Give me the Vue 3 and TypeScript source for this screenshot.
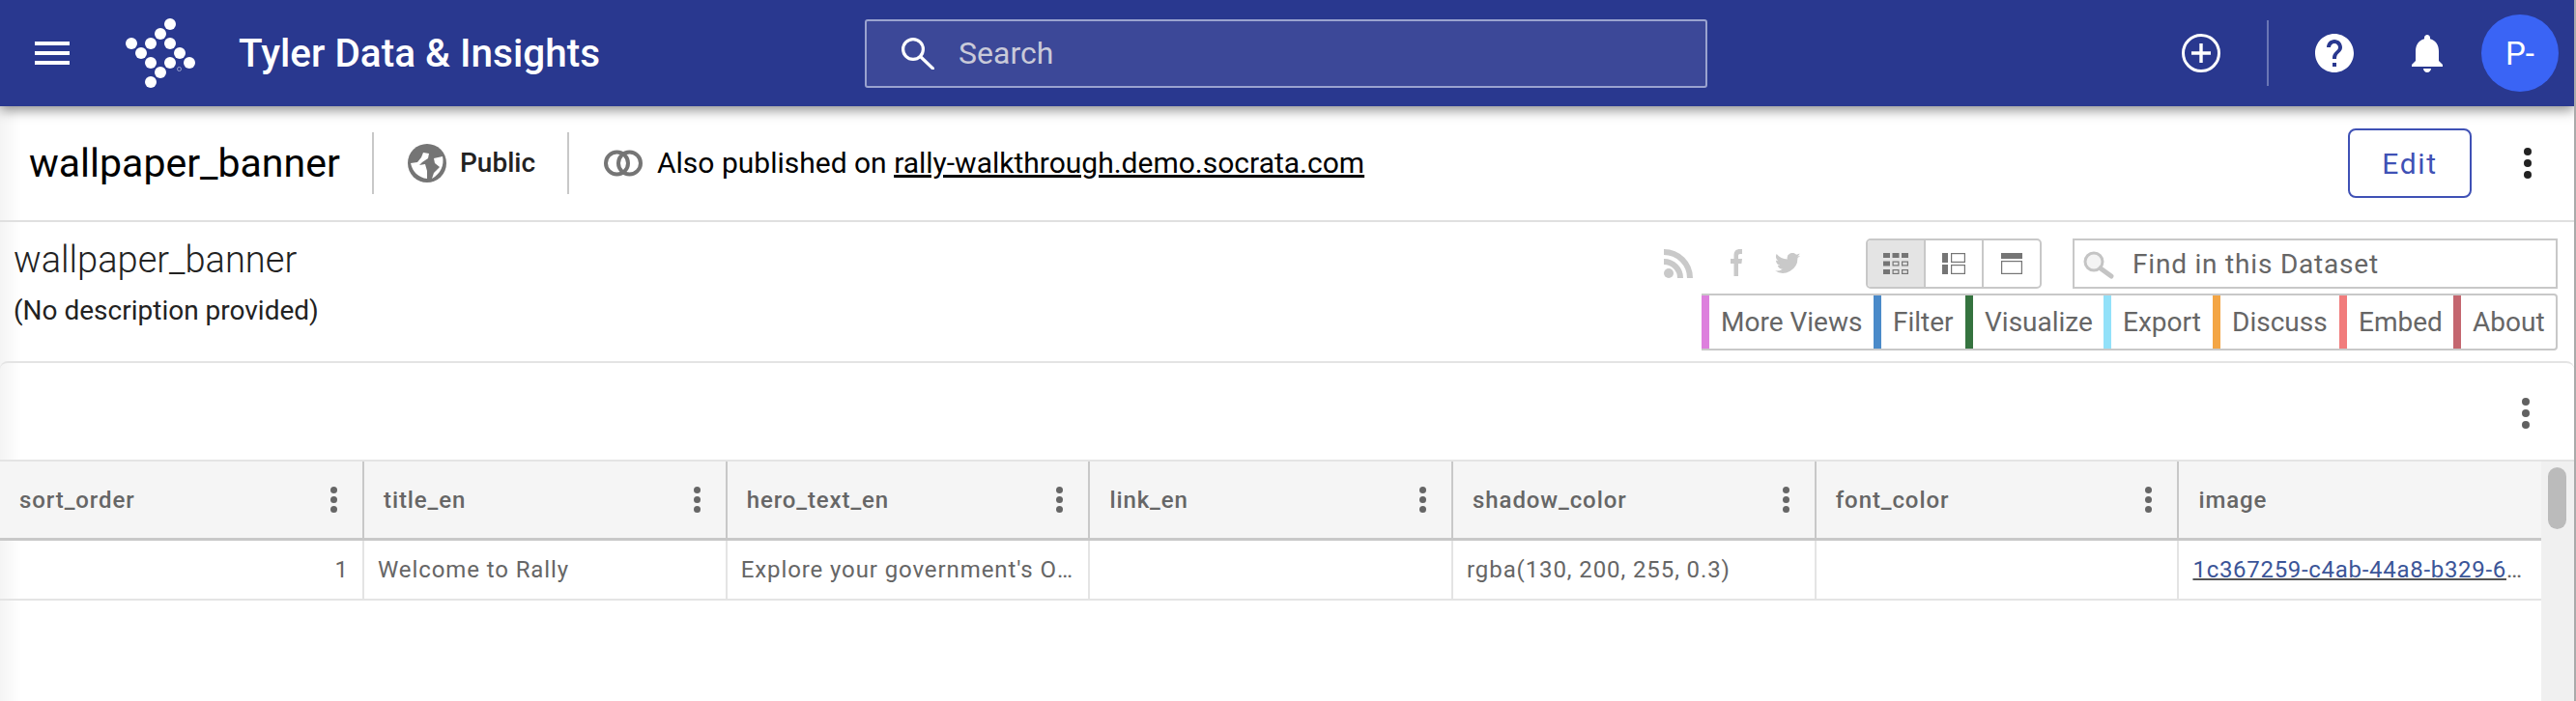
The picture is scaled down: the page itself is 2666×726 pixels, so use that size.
<script setup lang="ts">
const dots: [number, number][] = [
  [176, 23], [166, 33], [136, 43], [156, 43], [176, 43], [146, 53],
  [186, 53], [156, 63], [176, 63], [196, 63], [166, 73], [156, 83],
]
const tabs = [
  { label: 'More Views', color: '#dd80dd' },
  { label: 'Filter', color: '#4a8ac9' },
  { label: 'Visualize', color: '#35733f' },
  { label: 'Export', color: '#92e1f9' },
  { label: 'Discuss', color: '#f3a545' },
  { label: 'Embed', color: '#f17c7c' },
  { label: 'About', color: '#c4666f' },
]
const columns = ['sort_order', 'title_en', 'hero_text_en', 'link_en', 'shadow_color', 'font_color', 'image']
</script>

<template>
  <div class="page">
    <header class="topbar">
      <div class="burger"><span></span><span></span><span></span></div>
      <svg class="logo" viewBox="130 17 72 72" width="72" height="72">
        <circle v-for="(d, i) in dots" :key="i" :cx="d[0]" :cy="d[1]" r="6" fill="#fff" />
        <circle cx="185.500" cy="69.500" r="2" fill="none" stroke="#9aa3cf" stroke-width="1" />
      </svg>
      <div class="brand">Tyler Data &amp; Insights</div>
      <div class="search">
        <svg class="search-icon" viewBox="0 0 34 34" width="34" height="34">
          <circle cx="12" cy="13" r="10.400" fill="none" stroke="#fff" stroke-width="3.200" />
          <path d="M20 21l12.500 12" fill="none" stroke="#fff" stroke-width="3.200" stroke-linecap="round" />
        </svg>
        <span>Search</span>
      </div>
      <div class="top-actions">
        <svg viewBox="0 0 40 40" width="40" height="40" class="plus">
          <circle cx="20" cy="20" r="18.500" fill="none" stroke="#fff" stroke-width="3" />
          <path d="M20 10v20M10 20h20" stroke="#fff" stroke-width="3.400" />
        </svg>
        <div class="top-divider"></div>
        <svg viewBox="2 2 20 20" width="40" height="40" class="help">
          <path fill="#fff" d="M12 2C6.480 2 2 6.480 2 12s4.480 10 10 10 10-4.480 10-10S17.520 2 12 2zm1 17h-2v-2h2v2zm2.070-7.750l-.9.920C13.450 12.900 13 13.500 13 15h-2v-.5c0-1.100.450-2.100 1.170-2.830l1.240-1.260c.370-.360.590-.860.590-1.410 0-1.100-.9-2-2-2s-2 .9-2 2H8c0-2.210 1.790-4 4-4s4 1.790 4 4c0 .880-.360 1.680-.930 2.250z" />
        </svg>
        <svg viewBox="4 2 16 20" width="32" height="40" class="bell">
          <path fill="#fff" d="M12 22c1.100 0 2-.9 2-2h-4c0 1.100.9 2 2 2zm6-6v-5c0-3.070-1.630-5.640-4.500-6.320V4c0-.830-.670-1.500-1.500-1.500s-1.500.670-1.500 1.500v.680C7.640 5.360 6 7.920 6 11v5l-2 2v1h16v-1l-2-2z" />
        </svg>
        <div class="avatar">P-</div>
      </div>
    </header>

    <section class="assetbar">
      <h1 class="asset-name">wallpaper_banner</h1>
      <div class="vr"></div>
      <svg class="globe" viewBox="0 0 40 40" width="40" height="40">
        <circle cx="20" cy="20" r="20" fill="#757575" />
        <path fill="#fff" d="M3 20l7-1 4-5 2-5 6 1-1 5-6 4-3 3 6-1 2 7v8C11 35 5 29 3 20zM27 15l9-2c2 9-2 18-11 23l2-6 6-6-5-4z" />
      </svg>
      <span class="visibility">Public</span>
      <div class="vr"></div>
      <svg class="rings" viewBox="0 0 40 28" width="40" height="28">
        <circle cx="13.500" cy="14" r="11.500" fill="none" stroke="#757575" stroke-width="4" />
        <circle cx="26.500" cy="14" r="11.500" fill="none" stroke="#757575" stroke-width="4" />
      </svg>
      <span class="published">Also published on <span class="domain">rally-walkthrough.demo.socrata.com</span></span>
      <button class="edit">Edit</button>
      <div class="kebab big"><i></i><i></i><i></i></div>
    </section>

    <section class="infobar">
      <div class="info-left">
        <h2 class="ds-name">wallpaper_banner</h2>
        <p class="ds-desc">(No description provided)</p>
      </div>
      <div class="info-right">
        <div class="tools">
          <svg class="soc rss" viewBox="0 0 30 30" width="30" height="30">
            <circle cx="5" cy="25" r="5" fill="#c9c9c9" />
            <path d="M0 13a17 17 0 0 1 17 17M0 3a27 27 0 0 1 27 27" fill="none" stroke="#c9c9c9" stroke-width="6" />
          </svg>
          <svg class="soc fb" viewBox="0 0 12 28" width="12" height="28">
            <path fill="#c9c9c9" d="M3.500 28V15H0v-5h3.500V6.500C3.500 2 6 0 9.500 0H12v5H10C8.500 5 8 5.800 8 7v3h4l-.6 5H8v13z" />
          </svg>
          <svg class="soc tw" viewBox="0 0 24 20" width="30" height="22">
            <path fill="#c9c9c9" d="M24 2.400c-.9.400-1.800.7-2.800.8 1-.6 1.800-1.600 2.200-2.700-1 .6-2 1-3.100 1.200A4.900 4.900 0 0 0 11.800 6C7.700 5.800 4.100 3.900 1.700.9c-1.300 2.200-.6 5 1.500 6.500-.8 0-1.600-.2-2.200-.6 0 2.300 1.600 4.400 3.900 4.900-.7.200-1.500.2-2.200.1.600 2 2.400 3.400 4.600 3.400A10 10 0 0 1 0 16.700 14 14 0 0 0 21.500 4.500c1-.7 1.800-1.300 2.500-2.100z" />
          </svg>
          <div class="views">
            <div class="view active">
              <svg viewBox="0 0 26 22" width="26" height="22">
                <g fill="#757575">
                  <rect x="0" y="0" width="7" height="5" /><rect x="9.500" y="0" width="7" height="5" /><rect x="19" y="0" width="7" height="5" />
                  <rect x="0" y="8.500" width="7" height="5" /><rect x="0" y="17" width="7" height="5" />
                </g>
                <g fill="none" stroke="#757575" stroke-width="1.200">
                  <rect x="10.100" y="9.100" width="5.800" height="3.800" /><rect x="19.600" y="9.100" width="5.800" height="3.800" />
                  <rect x="10.100" y="17.600" width="5.800" height="3.800" /><rect x="19.600" y="17.600" width="5.800" height="3.800" />
                </g>
              </svg>
            </div>
            <div class="view">
              <svg viewBox="0 0 24 22" width="24" height="22">
                <g fill="#757575"><rect x="0" y="0" width="6" height="10" /><rect x="0" y="12" width="6" height="10" /></g>
                <g fill="none" stroke="#757575" stroke-width="1.200">
                  <rect x="9.600" y=".6" width="13.800" height="8.800" /><rect x="9.600" y="12.600" width="13.800" height="8.800" />
                </g>
              </svg>
            </div>
            <div class="view">
              <svg viewBox="0 0 22 22" width="22" height="22">
                <rect x="0" y="0" width="22" height="6" fill="#757575" />
                <rect x=".6" y="8.600" width="20.800" height="12.800" fill="none" stroke="#757575" stroke-width="1.200" />
              </svg>
            </div>
          </div>
          <div class="find">
            <svg viewBox="0 0 32 32" width="32" height="32">
              <circle cx="11" cy="14" r="9" fill="#f4f4f4" stroke="#c4c4c4" stroke-width="3" />
              <path d="M18 21l11 8" stroke="#c4c4c4" stroke-width="5" stroke-linecap="round" />
            </svg>
            <span>Find in this Dataset</span>
          </div>
        </div>
        <nav class="tabs">
          <div v-for="t in tabs" :key="t.label" class="tab" :style="{ borderLeftColor: t.color }">{{ t.label }}</div>
        </nav>
      </div>
    </section>

    <section class="grid-card">
      <div class="grid-tools">
        <div class="kebab mid"><i></i><i></i><i></i></div>
      </div>
      <div class="grid-body">
        <div class="grid-table">
          <div class="head-row">
            <div v-for="(c, i) in columns" :key="c" class="hcell">
              <span>{{ c }}</span>
              <div v-if="i < 6" class="kebab small"><i></i><i></i><i></i></div>
            </div>
          </div>
          <div class="data-row">
            <div class="dcell num">1</div>
            <div class="dcell">Welcome to Rally</div>
            <div class="dcell hero">Explore your government's Open Data</div>
            <div class="dcell"></div>
            <div class="dcell">rgba(130, 200, 255, 0.3)</div>
            <div class="dcell"></div>
            <div class="dcell link"><a>1c367259-c4ab-44a8-b329-6f0e3a1d9c27</a></div>
          </div>
        </div>
        <div class="scrolltrack"><div class="thumb"></div></div>
      </div>
    </section>
  </div>
</template>

<style>
html, body { margin: 0; padding: 0; background: #fff; overflow: hidden; }
</style>

<style scoped>
* { box-sizing: border-box; }
.page {
  width: 2666px;
  height: 726px;
  overflow: hidden;
  position: relative;
  font-family: Roboto, "Liberation Sans", sans-serif;
  background: linear-gradient(90deg, #f4f4f4 0, #fff 22px);
  border-right: 2px solid #aaa;
}
.topbar {
  height: 110px;
  background: #29388f;
  display: flex;
  align-items: center;
  position: relative;
  z-index: 2;
  box-shadow: 0 4px 12px rgba(0, 0, 0, 0.45);
  color: #fff;
}
.burger { width: 36px; margin-left: 36px; display: flex; flex-direction: column; gap: 6px; flex: none; }
.burger span { height: 4px; background: #fff; display: block; }
.logo { margin-left: 58px; flex: none; }
.brand { margin-left: 45px; font-size: 40.500px; font-weight: 500; width: 648px; flex: none; white-space: nowrap; }
.search {
  width: 872px;
  height: 71px;
  flex: none;
  border: 2px solid #9aa3cf;
  border-radius: 3px;
  background: #3c4898;
  display: flex;
  align-items: center;
  padding-left: 36px;
  font-size: 32px;
  color: #c9cad9;
}
.search-icon { margin-right: 25px; flex: none; }
.top-actions { flex: 1; display: flex; align-items: center; height: 110px; }
.plus { margin-left: 491px; flex: none; }
.top-divider { width: 2px; height: 68px; background: #6a76b5; margin-left: 48px; flex: none; }
.help { margin-left: 48px; flex: none; }
.bell { margin-left: 60px; flex: none; }
.avatar {
  width: 80px;
  height: 80px;
  border-radius: 50%;
  background: #3a64f5;
  margin-left: 40px;
  flex: none;
  display: flex;
  align-items: center;
  justify-content: center;
  font-size: 33px;
}
.assetbar {
  height: 120px;
  display: flex;
  align-items: center;
  border-bottom: 2px solid #e0e0e0;
  padding-left: 30px;
  position: relative;
}
.asset-name { margin: 0; font-size: 41px; font-weight: 400; color: #000; width: 355px; white-space: nowrap; }
.vr { width: 2px; height: 64px; background: #c8c8c8; flex: none; }
.globe { margin-left: 35px; flex: none; }
.visibility { font-size: 28px; font-weight: 500; color: #222; margin: 0 0 2px 14px; width: 111px; }
.rings { margin-left: 36px; flex: none; }
.published { font-size: 30px; color: #000; margin: 0 0 2px 15px; white-space: nowrap; }
.domain { text-decoration: underline; }
.edit {
  position: absolute;
  left: 2430px;
  top: 23px;
  width: 128px;
  height: 72px;
  background: #fff;
  border: 2px solid #3f51b5;
  border-radius: 8px;
  color: #3f51b5;
  font: 400 30px Roboto, sans-serif;
  letter-spacing: 1.700px;
}
.kebab { display: flex; flex-direction: column; align-items: center; }
.kebab i { display: block; border-radius: 50%; }
.big { position: absolute; left: 2612px; top: 43px; gap: 4px; }
.big i { width: 8px; height: 8px; background: #222; }
.infobar { height: 144px; display: flex; justify-content: space-between; position: relative; }
.info-left { padding-left: 14px; }
.ds-name { margin: 17px 0 0; font-size: 38px; font-weight: 300; color: #222; }
.ds-desc { margin: 14px 0 0; font-size: 28px; color: #222; }
.info-right { width: 927px; margin-right: 17px; padding-top: 17px; }
.tools { display: flex; align-items: flex-start; height: 52px; position: relative; }
.soc { position: absolute; filter: blur(.6px); }
.rss { left: 2px; top: 11px; }
.fb { left: 71px; top: 11px; }
.tw { left: 115px; top: 15px; }
.views {
  position: absolute;
  left: 211px;
  top: 0;
  width: 182px;
  height: 52px;
  display: flex;
  border: 2px solid #c8c8c8;
  border-radius: 5px;
  overflow: hidden;
}
.view { flex: 1; display: flex; align-items: center; justify-content: center; border-left: 2px solid #c8c8c8; }
.view:first-child { border-left: 0; background: #e4e4e4; }
.find {
  position: absolute;
  left: 425px;
  top: 0;
  width: 502px;
  height: 52px;
  border: 2px solid #c8c8c8;
  display: flex;
  align-items: center;
  padding-left: 9px;
  font-size: 28px;
  color: #666;
  letter-spacing: .8px;
}
.find svg { filter: blur(.5px); flex: none; }
.find span { margin-left: 19px; }
.tabs {
  margin-left: 41px;
  margin-top: 5px;
  height: 59px;
  width: 886px;
  display: flex;
  border: 2px solid #c8c8c8;
  border-left: 0;
  border-radius: 0 4px 4px 0;
}
.tab {
  border-left: 8px solid;
  font-size: 28px;
  color: #666;
  padding-left: 12px;
  display: flex;
  align-items: center;
  white-space: nowrap;
}
.tab:nth-child(1) { width: 178px; }
.tab:nth-child(2) { width: 95px; }
.tab:nth-child(3) { width: 143px; }
.tab:nth-child(4) { width: 113px; }
.tab:nth-child(5) { width: 131px; }
.tab:nth-child(6) { width: 118px; }
.tab:nth-child(7) { flex: 1; }
.grid-card {
  border-top: 2px solid #e4e4e4;
  border-top-left-radius: 8px;
  border-top-right-radius: 8px;
  height: 352px;
  position: relative;
}
.grid-tools { height: 102px; border-bottom: 2px solid #e4e4e4; position: relative; }
.mid { position: absolute; left: 2610px; top: 36px; gap: 4px; }
.mid i { width: 8px; height: 8px; background: #616161; }
.grid-body { display: flex; height: 250px; }
.grid-table { width: 2630px; flex: none; }
.head-row { display: grid; grid-template-columns: 377px repeat(5, 375.700px) 1fr; height: 82px; background: #f5f5f5; border-bottom: 3px solid #c8c8c8; }
.hcell { position: relative; padding-left: 20px; display: flex; align-items: center; font-size: 24px; font-weight: 500; color: #666; letter-spacing: .9px; border-right: 2px solid #c8c8c8; }
.hcell:last-child { border-right: 0; }
.small { position: absolute; right: 26px; top: 26px; gap: 3px; }
.small i { width: 7px; height: 7px; background: #666; }
.data-row { display: grid; grid-template-columns: 377px repeat(5, 375.700px) 1fr; height: 62px; border-bottom: 2px solid #e4e4e4; }
.dcell { font-size: 24px; color: #666; letter-spacing: .9px; padding: 0 14px; line-height: 60px; border-right: 2px solid #e4e4e4; white-space: nowrap; overflow: hidden; text-overflow: ellipsis; min-width: 0; }
.dcell:last-child { border-right: 0; }
.num { text-align: right; }
.hero { padding-right: 3px; }
.link { letter-spacing: .7px; padding-right: 17px; }
.link a { color: #3b5598; text-decoration: underline; text-decoration-color: #555; text-decoration-thickness: 2px; }
.scrolltrack { flex: 1; background: #f0f0f0; position: relative; }
.thumb { position: absolute; left: 7px; top: 6px; width: 19px; height: 64px; border-radius: 10px; background: #bbb; }
</style>
